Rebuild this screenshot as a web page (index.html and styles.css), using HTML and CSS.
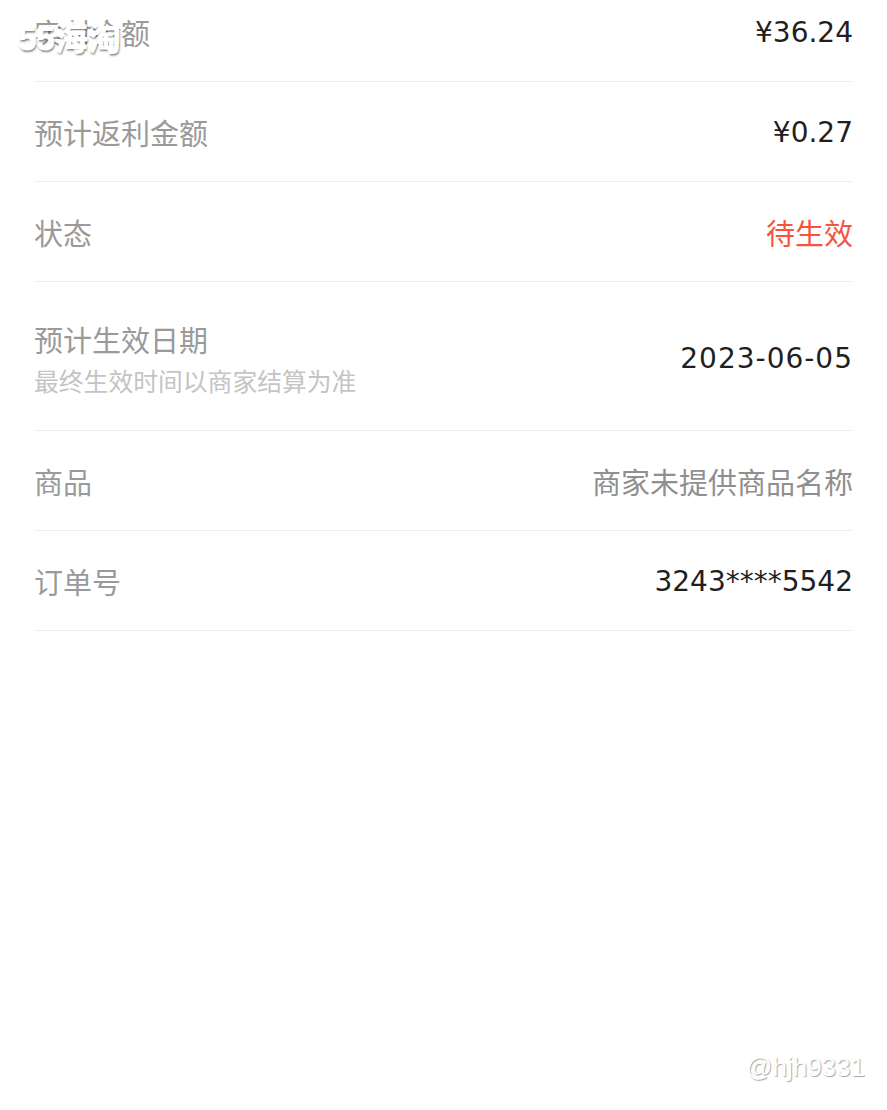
FILE: index.html
```html
<!DOCTYPE html>
<html lang="zh-CN">
<head>
    <meta charset="UTF-8">
    <meta name="viewport" content="width=device-width, initial-scale=1.0">
    <title>订单详情</title>
    <link rel="stylesheet" href="styles.css">
</head>
<body>

    <div class="detail-list">
        <div class="row">
            <span class="label">实付金额</span>
            <span class="value">¥36.24</span>
        </div>
        <div class="row">
            <span class="label">预计返利金额</span>
            <span class="value">¥0.27</span>
        </div>
        <div class="row">
            <span class="label">状态</span>
            <span class="value text pending">待生效</span>
        </div>
        <div class="row tall">
            <div class="label-group">
                <span class="label">预计生效日期</span>
                <span class="sub-label">最终生效时间以商家结算为准</span>
            </div>
            <span class="value date">2023-06-05</span>
        </div>
        <div class="row">
            <span class="label">商品</span>
            <span class="value text muted">商家未提供商品名称</span>
        </div>
        <div class="row">
            <span class="label">订单号</span>
            <span class="value">3243****5542</span>
        </div>
    </div>

    <div class="watermark site-mark">55海淘</div>
    <div class="watermark user-mark">@hjh9331</div>

</body>
</html>
```

FILE: styles.css
```css
body {
    margin: 0;
    background-color: #fff;
    font-family: "Liberation Sans", "Noto Sans CJK SC", sans-serif;
    width: 887px;
    height: 1110px;
    overflow: hidden;
    position: relative;
}
.detail-list {
    margin-top: -18px; /* page is scrolled a little */
    padding: 0 34px;
}
.row {
    display: flex;
    justify-content: space-between;
    align-items: center;
    height: 99px;
    border-bottom: 1px solid #efefef;
}
.row.tall {
    height: 148px;
}
.label-group {
    display: flex;
    flex-direction: column;
    gap: 2px;
    padding-top: 4px;
}
.label {
    font-size: 29px;
    color: #9a9a9a;
}
.sub-label {
    font-size: 24.8px;
    color: #c4c4c4;
}
.value {
    font-family: "DejaVu Sans", "Noto Sans CJK SC", sans-serif;
    font-size: 28px;
    color: #1f1f1f;
    padding-top: 2px;
}
.value.date {
    letter-spacing: 1px;
    padding-top: 4px;
}
.value.text {
    font-family: "Noto Sans CJK SC", sans-serif;
    font-size: 29px;
    padding-top: 0;
}
.value.pending {
    color: #f4553c;
}
.value.muted {
    color: #8f8f8f;
}
.watermark {
    position: absolute;
    color: #fff;
}
.site-mark {
    top: 12px;
    left: 18px;
    font-size: 33px;
    font-weight: bold;
    letter-spacing: 0;
    -webkit-text-stroke: 1px #fff;
    text-shadow: 1px 2px 2px rgba(0,0,0,0.5);
}
.user-mark {
    top: 1052px;
    right: 22px;
    font-size: 26px;
    text-shadow: 1px 1px 1px rgba(0,0,0,0.35);
}
```
